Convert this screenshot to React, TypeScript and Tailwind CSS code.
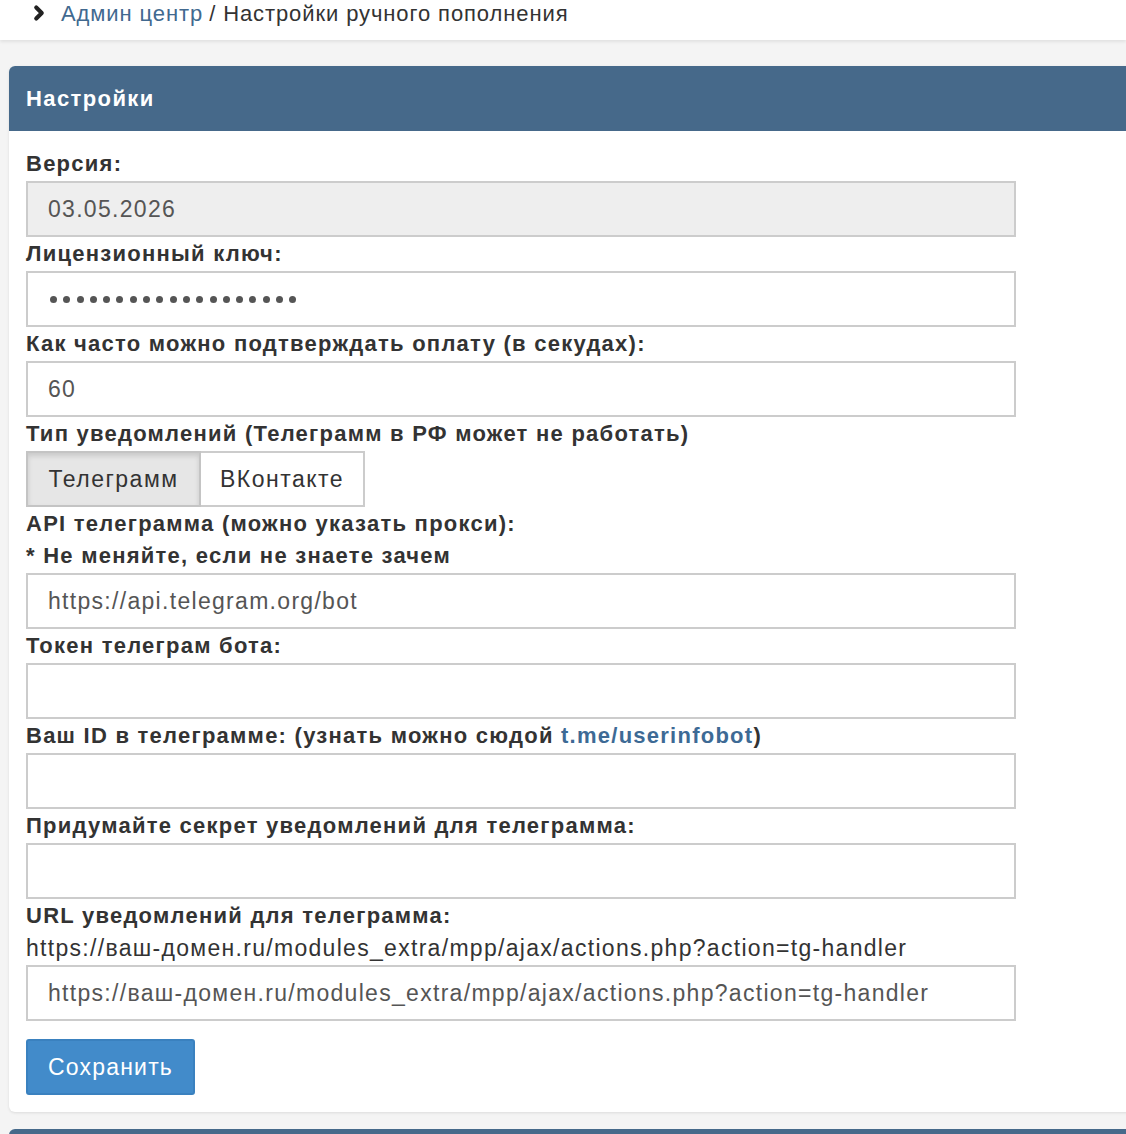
import { ChevronRight } from "lucide-react";

const font = { fontFamily: '"Liberation Sans", Arial, sans-serif' };

function Label({ children }: { children: React.ReactNode }) {
  return (
    <div className="h-[34px] text-[22px] font-bold leading-[34px] tracking-[1.25px] text-[#333]">{children}</div>
  );
}

function Field({ value = "", disabled = false }: { value?: string; disabled?: boolean }) {
  return (
    <div
      className={`flex h-[56px] w-[990px] items-center border-2 border-[#cccccc] px-[20px] text-[23px] tracking-[1.3px] text-[#555] ${
        disabled ? "bg-[#eeeeee]" : "bg-white"
      }`}
    >
      {value}
    </div>
  );
}

function Dots({ count }: { count: number }) {
  return (
    <div className="flex h-[56px] w-[990px] items-center gap-[6.3px] border-2 border-[#cccccc] bg-white px-[22px]">
      {Array.from({ length: count }).map((_, i) => (
        <span key={i} className="h-[7px] w-[7px] rounded-full bg-[#555]" />
      ))}
    </div>
  );
}

export default function App() {
  return (
    <div className="h-[1134px] w-[1126px] overflow-hidden bg-[#f4f4f4]" style={font}>
      <div className="flex h-[40px] items-center bg-white pb-[14px] pl-[28px] text-[22px] tracking-[0.9px] shadow-[0_2px_3px_rgba(0,0,0,0.08)]">
        <ChevronRight className="mr-[11px] h-[22px] w-[22px] text-[#222]" strokeWidth={4.5} />
        <span className="text-[#41698f]">Админ центр</span>
        <span className="ml-[6px] text-[#333]">/ Настройки ручного пополнения</span>
      </div>

      <div className="ml-[9px] mt-[26px] w-[1140px] rounded-[6px] bg-white shadow-[0_1px_3px_rgba(0,0,0,0.1)]">
        <div className="flex h-[65px] items-center rounded-t-[6px] bg-[#46698a] pl-[17px] text-[22px] font-bold tracking-[1.4px] text-white">
          Настройки
        </div>
        <div className="flex flex-col pb-[17px] pl-[17px] pt-[16px]">
          <Label>Версия:</Label>
          <Field value="03.05.2026" disabled />
          <Label>Лицензионный ключ:</Label>
          <Dots count={19} />
          <Label>Как часто можно подтверждать оплату (в секудах):</Label>
          <Field value="60" />
          <Label>Тип уведомлений (Телеграмм в РФ может не работать)</Label>
          <div className="flex h-[56px] text-[23px] tracking-[1.5px] text-[#333]">
            <div className="flex w-[175px] items-center justify-center border-2 border-[#c4c4c4] bg-[#e6e6e6] shadow-[inset_0_3px_5px_rgba(0,0,0,0.125)]">
              Телеграмм
            </div>
            <div className="flex w-[164px] items-center justify-center border-2 border-l-0 border-[#cccccc] bg-white">
              ВКонтакте
            </div>
          </div>
          <Label>API телеграмма (можно указать прокси):</Label>
          <div className="h-[32px] text-[22px] font-bold leading-[30px] tracking-[1.25px] text-[#333]">
            * Не меняйте, если не знаете зачем
          </div>
          <Field value="https://api.telegram.org/bot" />
          <Label>Токен телеграм бота:</Label>
          <Field />
          <Label>
            Ваш ID в телеграмме: (узнать можно сюдой <span className="text-[#3d6a95]">t.me/userinfobot</span>)
          </Label>
          <Field />
          <Label>Придумайте секрет уведомлений для телеграмма:</Label>
          <Field />
          <Label>URL уведомлений для телеграмма:</Label>
          <div className="h-[32px] text-[23px] leading-[30px] tracking-[1.3px] text-[#333]">
            https://ваш-домен.ru/modules_extra/mpp/ajax/actions.php?action=tg-handler
          </div>
          <Field value="https://ваш-домен.ru/modules_extra/mpp/ajax/actions.php?action=tg-handler" />
          <div className="mt-[18px]">
            <button className="h-[56px] w-[169px] rounded-[3px] border-2 border-[#3a81bf] bg-[#428bca] text-[23px] tracking-[1.2px] text-white">
              Сохранить
            </button>
          </div>
        </div>
      </div>

      <div className="ml-[9px] mt-[17px] h-[40px] w-[1140px] rounded-t-[6px] bg-[#46698a]" />
    </div>
  );
}
